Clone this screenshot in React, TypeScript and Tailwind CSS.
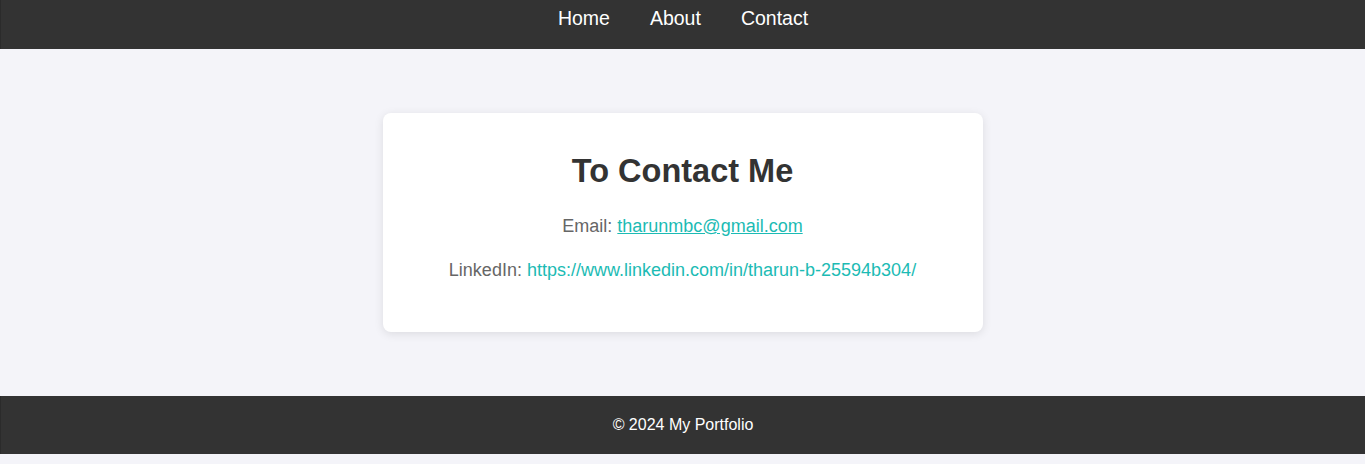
export default function App() {
  return (
    <div className="min-h-[464px] bg-[#f4f4f9] font-['Liberation_Sans',Arial,sans-serif] pb-[10px]">
      {/* Header nav */}
      <header className="h-[49px] bg-[#333] border-l border-[#2b2b2b] flex justify-center pt-[7px]">
        <nav className="flex gap-[40px] text-[19.5px] leading-[22px] text-white">
          <a href="#">Home</a>
          <a href="#">About</a>
          <a href="#">Contact</a>
        </nav>
      </header>

      {/* Contact card */}
      <main className="flex justify-center py-[64px]">
        <section className="w-[600px] bg-white rounded-lg shadow-[0_2px_10px_rgba(0,0,0,0.1)] px-[40px] pt-[40px] pb-[48px] text-center">
          <h2 className="text-[32.5px] leading-[37px] font-bold text-[#333]">To Contact Me</h2>
          <p className="mt-[22px] text-[18px] leading-[28px] text-[#666]">
            Email: <a href="#" className="text-[#1cbbb4] underline">tharunmbc@gmail.com</a>
          </p>
          <p className="mt-[16px] text-[18px] leading-[28px] text-[#666]">
            LinkedIn: <a href="#" className="text-[#1cbbb4]">https://www.linkedin.com/in/tharun-b-25594b304/</a>
          </p>
        </section>
      </main>

      {/* Footer */}
      <footer className="h-[58px] bg-[#333] border-l border-[#2b2b2b] flex items-center justify-center text-white text-[16px]">
        © 2024 My Portfolio
      </footer>
    </div>
  );
}
